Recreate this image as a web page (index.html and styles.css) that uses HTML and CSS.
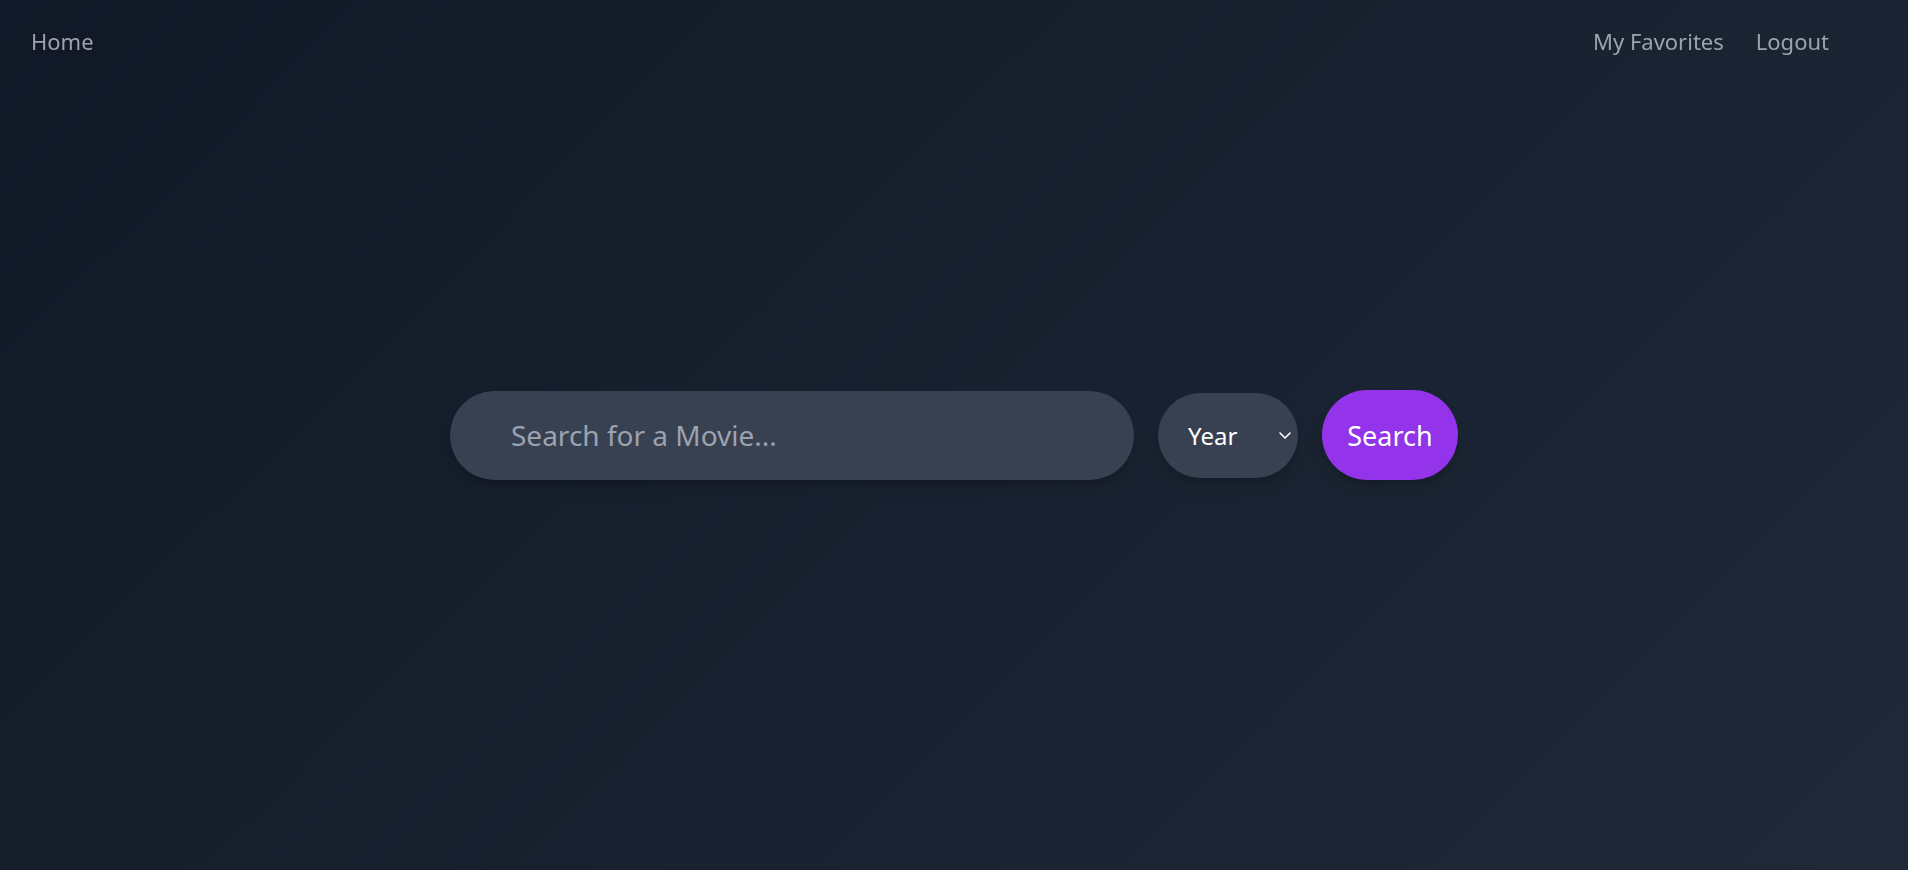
FILE: index.html
```html
<!DOCTYPE html>
<html lang="en">
<head>
<meta charset="utf-8">
<title>Movie Search</title>
<link rel="stylesheet" href="styles.css">
</head>
<body>
<nav class="nav">
  <a class="nav-link" href="#">Home</a>
  <div class="nav-right">
    <a class="nav-link" href="#">My Favorites</a>
    <a class="nav-link" href="#">Logout</a>
  </div>
</nav>
<main class="main">
  <form class="search-form">
    <input class="search-input" type="text" placeholder="Search for a Movie...">
    <select class="year-select">
      <option>Year</option>
    </select>
    <button class="search-btn" type="button">Search</button>
  </form>
</main>
</body>
</html>
```

FILE: styles.css
```css
* { box-sizing: border-box; }
html, body { height: 100%; }
body {
  margin: 0;
  font-family: "Noto Sans", "Open Sans", sans-serif;
  background: linear-gradient(135deg, #111827 0%, #1f2937 100%);
  color: #fff;
  min-height: 100vh;
}
.nav {
  position: fixed;
  top: 0; left: 0; right: 0;
  display: flex;
  justify-content: space-between;
  align-items: center;
  padding: 26px 79px 0 31px;
}
.nav-right { display: flex; gap: 32px; }
.nav-link {
  color: #9ca3af;
  text-decoration: none;
  font-size: 22px;
  line-height: 30px;
}
.main {
  height: 100vh;
  display: flex;
  align-items: center;
  justify-content: center;
}
.search-form {
  display: flex;
  align-items: center;
  gap: 24px;
}
.search-input {
  width: 684px;
  height: 89px;
  border: none;
  outline: none;
  border-radius: 9999px;
  background: #374151;
  color: #fff;
  padding: 0 24px 0 61px;
  font-family: inherit;
  font-size: 28px;
  box-shadow: 0 10px 15px -3px rgba(0,0,0,0.15), 0 4px 6px -4px rgba(0,0,0,0.15);
}
.search-input::placeholder { color: #9ca3af; }
.year-select {
  appearance: none;
  -webkit-appearance: none;
  width: 140px;
  height: 85px;
  border: none;
  outline: none;
  border-radius: 9999px;
  background-color: #374151;
  background-image: url("data:image/svg+xml;utf8,<svg xmlns='http://www.w3.org/2000/svg' width='14' height='9' viewBox='0 0 14 9'><path d='M2 2l5 5 5-5' fill='none' stroke='white' stroke-width='1.6' stroke-linecap='round' stroke-linejoin='round'/></svg>");
  background-repeat: no-repeat;
  background-position: 120px 50%;
  color: #fff;
  padding: 0 0 0 30px;
  font-family: inherit;
  font-size: 24px;
  box-shadow: 0 10px 15px -3px rgba(0,0,0,0.15), 0 4px 6px -4px rgba(0,0,0,0.15);
}
.search-btn {
  width: 136px;
  height: 90px;
  border: none;
  border-radius: 9999px;
  background: #9333ea;
  color: #fff;
  font-family: inherit;
  font-size: 27px;
  cursor: pointer;
  box-shadow: 0 10px 15px -3px rgba(0,0,0,0.15), 0 4px 6px -4px rgba(0,0,0,0.15);
}
```
